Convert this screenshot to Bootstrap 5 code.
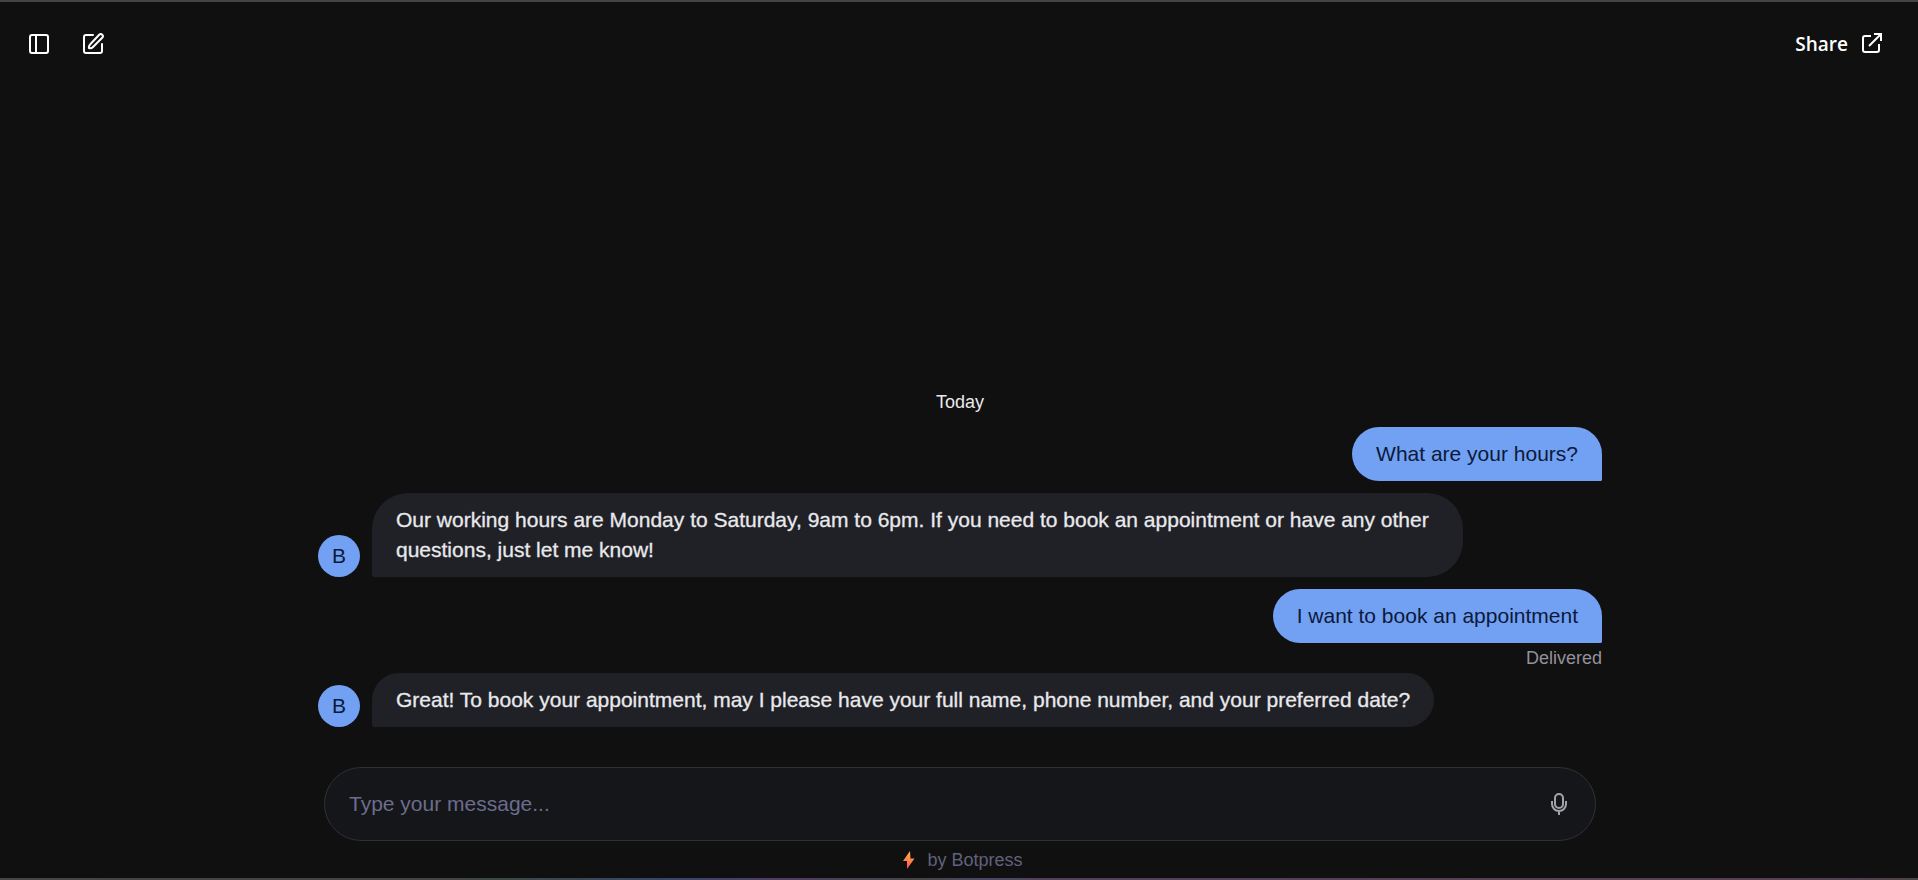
<!DOCTYPE html>
<html lang="en">
<head>
<meta charset="utf-8">
<meta name="viewport" content="width=device-width, initial-scale=1">
<title>Chat</title>
<link href="https://cdn.jsdelivr.net/npm/bootstrap@5.3.0/dist/css/bootstrap.min.css" rel="stylesheet">
<style>
  body { background: #101010; color: #e9e9ec; font-family: "Liberation Sans", Arial, sans-serif; font-size: 21px; line-height: 30px; border-top: 2px solid #444; }
  .edge-line { height: 2px; background: linear-gradient(90deg, #474545, #454444 22%, #3a4a4c 28%, #39456a 35%, #4d3d66 40%, #474545 48%, #474866 51%, #54405a 55%, #583f56 93%, #4a4448); }
  .top-bar { padding: 27px 34px 0 28px; }
  .icon-button { color: #fff; background: none; border: 0; padding: 0; }
  .icon-button svg, .share-link svg { display: block; }
  .share-link { color: #fff; font-family: "Open Sans", "Noto Sans", sans-serif; font-size: 19px; font-weight: 600; gap: 12px; }
  .chat-column { width: 100%; max-width: 1286px; padding-left: 2px; }
  .thread { gap: 12px; }
  .message-row { gap: 12px; }
  .bubble { padding: 12px 24px; border-radius: 36px; max-width: 85%; }
  .bubble-user { background: #72a0f3; color: #0b1a3a; border-bottom-right-radius: 2px; }
  .bubble-bot { background: #202127; border-bottom-left-radius: 3px; -webkit-text-stroke: 0.3px; }
  .avatar { width: 42px; height: 42px; background: #72a0f3; color: #0b1a3a; }
  .note { font-size: 18px; line-height: 30px; }
  .day-label { margin-bottom: -2px; }
  .status { color: #929298; }
  .thread .status + .message-row, .thread .status { margin-top: -12px; }
  .composer { background: #15161a; border: 1px solid #303136; border-radius: 37px; padding: 21px 24px; margin: 40px 6px 4px; }
  .composer input { background: none; border: 0; padding: 0; outline: 0; color: #e9e9ec; font-size: 21px; line-height: 30px; }
  .composer input::placeholder { color: #6c6d8c; opacity: 1; }
  .composer .icon-button { color: #a3a4aa; }
  .brand { color: #61617c; gap: 12px; padding: 0 0 3px 8px; }
</style>
</head>
<body class="d-flex flex-column min-vh-100">
<header class="top-bar d-flex justify-content-between align-items-center">
  <div class="d-flex align-items-center gap-4">
    <button class="icon-button" type="button" aria-label="Toggle sidebar">
      <svg width="22" height="22" viewBox="0 0 22 22" fill="none" stroke="currentColor" stroke-width="2"><rect x="2" y="2" width="18" height="18" rx="2"/><path d="M8 2v18"/></svg>
    </button>
    <button class="icon-button ms-2" type="button" aria-label="New conversation">
      <svg width="22" height="22" viewBox="0 0 22 22" fill="none" stroke="currentColor" stroke-width="2" stroke-linecap="round" stroke-linejoin="round"><path d="M11 2H4a2 2 0 0 0-2 2v14a2 2 0 0 0 2 2h14a2 2 0 0 0 2-2v-7"/><path d="M17.200 1.800a2 2 0 0 1 3 3L11 14q-2 2-4 1-.5-2 1.500-4z"/></svg>
    </button>
  </div>
  <a class="share-link d-flex align-items-center text-decoration-none" href="#">Share
    <svg width="24" height="24" viewBox="0 0 24 24" fill="none" stroke="currentColor" stroke-width="2"><path d="M11 4H5a2 2 0 0 0-2 2v12a2 2 0 0 0 2 2h12a2 2 0 0 0 2-2v-6M14 2h7v7M21 2 9 14"/></svg>
  </a>
</header>
<main class="chat-column mx-auto flex-grow-1 d-flex flex-column justify-content-end">
  <div class="thread d-flex flex-column">
    <div class="note day-label text-center">Today</div>
    <div class="message-row d-flex justify-content-end"><div class="bubble bubble-user">What are your hours?</div></div>
    <div class="message-row d-flex align-items-end">
      <div class="avatar rounded-circle d-flex align-items-center justify-content-center flex-shrink-0">B</div>
      <div class="bubble bubble-bot">Our working hours are Monday to Saturday, 9am to 6pm. If you need to book an appointment or have any other questions, just let me know!</div>
    </div>
    <div class="message-row d-flex justify-content-end"><div class="bubble bubble-user">I want to book an appointment</div></div>
    <div class="note status text-end">Delivered</div>
    <div class="message-row d-flex align-items-end">
      <div class="avatar rounded-circle d-flex align-items-center justify-content-center flex-shrink-0">B</div>
      <div class="bubble bubble-bot">Great! To book your appointment, may I please have your full name, phone number, and your preferred date?</div>
    </div>
  </div>
  <form class="composer d-flex align-items-center">
    <input class="flex-grow-1" type="text" placeholder="Type your message..." aria-label="Message">
    <button class="icon-button" type="button" aria-label="Record a voice message">
      <svg width="24" height="24" viewBox="0 0 24 24" fill="none" stroke="currentColor" stroke-width="2"><rect x="8" y="2" width="8" height="14" rx="4"/><path d="M5 9v3a7 7 0 0 0 14 0V9M12 19v4"/></svg>
    </button>
  </form>
</main>
<footer class="brand note d-flex align-items-center justify-content-center">
  <svg width="12" height="18" viewBox="0 0 12 18" aria-hidden="true"><defs><linearGradient id="bolt" x1="0" y1="0" x2="0" y2="1"><stop offset="0" stop-color="#ffb04a"/><stop offset=".55" stop-color="#ff8148"/><stop offset="1" stop-color="#fb4a5e"/></linearGradient></defs><path fill="url(#bolt)" d="M7 0 0 10h4L4 18l7.500-10.500H7.500z"/></svg>
  <span>by Botpress</span>
</footer>
<div class="edge-line"></div>
<script src="https://cdn.jsdelivr.net/npm/bootstrap@5.3.0/dist/js/bootstrap.bundle.min.js"></script>
</body>
</html>
